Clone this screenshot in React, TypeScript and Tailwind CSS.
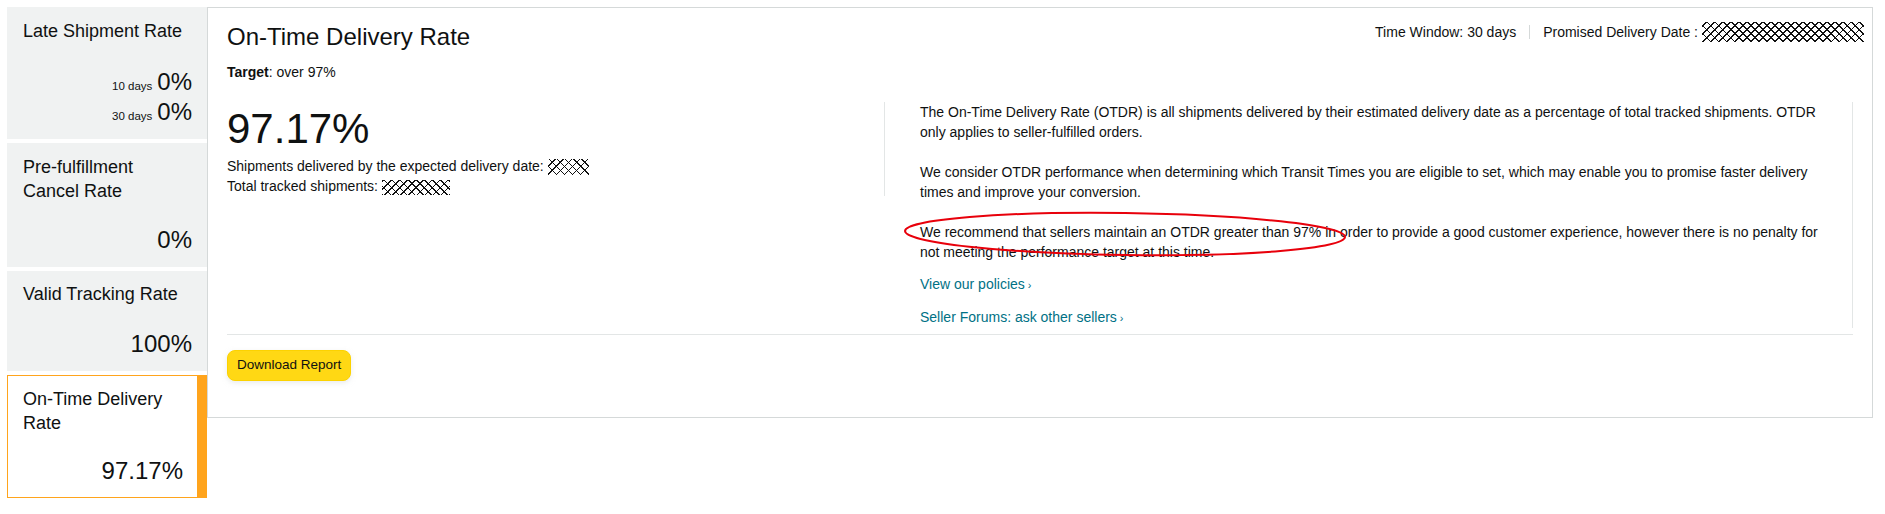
const hatch =
  "bg-[repeating-linear-gradient(45deg,#111_0_1.4px,transparent_1.4px_5.66px),repeating-linear-gradient(-45deg,#111_0_1.4px,transparent_1.4px_5.66px)]";

function Hatch({ className }: { className: string }) {
  return <span className={`inline-block align-middle ${hatch} ${className}`} />;
}

function Ellipse() {
  return (
    <svg
      className="absolute left-[898px] top-[205px] pointer-events-none"
      width="456"
      height="58"
      viewBox="0 0 456 58"
    >
      <ellipse
        cx="227"
        cy="29"
        rx="220"
        ry="21"
        fill="none"
        stroke="#e8000b"
        strokeWidth="2"
        transform="rotate(0.8 227 29)"
      />
    </svg>
  );
}

export default function App() {
  return (
    <div className="relative flex items-start pt-[7px] pl-[7px] pr-[12px] font-['Liberation_Sans',Arial,sans-serif] text-[#0F1111] bg-white min-h-[514px]">
      {/* left metric cards */}
      <aside className="w-[200px] shrink-0 flex flex-col gap-[4px]">
        <div className="h-[132px] bg-[#F0F2F2] pt-[12px] pl-[16px] pr-[15px] pb-[12px] flex flex-col justify-between">
          <div className="text-[18px] leading-[24px]">Late Shipment Rate</div>
          <div className="flex flex-col items-end">
            <div className="h-[30px] flex items-baseline leading-[30px]">
              <span className="text-[11.5px] mr-[5px]">10 days</span>
              <span className="text-[24px]">0%</span>
            </div>
            <div className="h-[30px] flex items-baseline leading-[30px]">
              <span className="text-[11.5px] mr-[5px]">30 days</span>
              <span className="text-[24px]">0%</span>
            </div>
          </div>
        </div>

        <div className="h-[124px] bg-[#F0F2F2] pt-[12px] pl-[16px] pr-[15px] pb-[12px] flex flex-col justify-between">
          <div className="text-[18px] leading-[24px]">
            Pre-fulfillment
            <br />
            Cancel Rate
          </div>
          <div className="text-right text-[24px] leading-[30px]">0%</div>
        </div>

        <div className="h-[100px] bg-[#F0F2F2] pt-[11px] pl-[16px] pr-[15px] pb-[12px] flex flex-col justify-between">
          <div className="text-[18px] leading-[24px]">Valid Tracking Rate</div>
          <div className="text-right text-[24px] leading-[30px]">100%</div>
        </div>

        <div className="h-[123px] bg-white border border-[#FFA41C] border-r-[10px] pt-[11px] pl-[15px] pr-[14px] pb-[11px] flex flex-col justify-between">
          <div className="text-[18px] leading-[24px]">
            On-Time Delivery
            <br />
            Rate
          </div>
          <div className="text-right text-[24px] leading-[30px]">97.17%</div>
        </div>
      </aside>

      {/* main panel */}
      <main className="flex-1 h-[411px] border border-[#D5D9D9] pt-[13px] px-[19px]">
        <div className="flex justify-between items-start">
          <h1 className="text-[24px] leading-[32px] font-normal">On-Time Delivery Rate</h1>
          <div className="flex items-center text-[14px] leading-[20px] mt-[1px] -mr-[11px]">
            <span>Time Window: 30 days</span>
            <span className="mx-[13px] w-px h-[14px] bg-[#D5D9D9]" />
            <span>Promised Delivery Date :</span>
            <Hatch className="ml-[4px] w-[162px] h-[20px]" />
          </div>
        </div>

        <div className="mt-[9px] text-[14px] leading-[20px]">
          <span className="font-bold">Target</span>: over 97%
        </div>

        <div className="mt-[20px] flex items-start border-b border-[#E3E6E6] pb-[6px]">
          <div className="w-[658px] shrink-0 border-r border-[#E3E6E6]">
            <div className="text-[42px] leading-[54px]">97.17%</div>
            <div className="text-[14px] leading-[20px]">
              Shipments delivered by the expected delivery date: <Hatch className="w-[41px] h-[16px]" />
            </div>
            <div className="text-[14px] leading-[20px]">
              Total tracked shipments: <Hatch className="w-[68px] h-[15px]" />
            </div>
          </div>

          <div className="flex-1 border-r border-[#E3E6E6] pl-[35px] pr-[16px] text-[14px] leading-[20px]">
            <p>
              The On-Time Delivery Rate (OTDR) is all shipments delivered by their estimated delivery date as a
              percentage of total tracked shipments. OTDR only applies to seller-fulfilled orders.
            </p>
            <p className="mt-[20px]">
              We consider OTDR performance when determining which Transit Times you are eligible to set, which may
              enable you to promise faster delivery times and improve your conversion.
            </p>
            <p className="mt-[20px]">
              We recommend that sellers maintain an OTDR greater than 97% in order to provide a good customer
              experience, however there is no penalty for not meeting the performance target at this time.
            </p>
            <p className="mt-[12px] text-[#007185]">
              View our policies<span className="text-[11px] ml-[3px]">›</span>
            </p>
            <p className="mt-[12px] text-[#007185]">
              Seller Forums: ask other sellers<span className="text-[11px] ml-[3px]">›</span>
            </p>
          </div>
        </div>

        <button className="mt-[15px] h-[31px] px-[9px] rounded-[8px] bg-[#FFD814] border border-[#FCD200] shadow-[0_2px_5px_rgba(213,217,217,0.5)] text-[13.5px] text-[#0F1111]">
          Download Report
        </button>
      </main>

      <Ellipse />
    </div>
  );
}
